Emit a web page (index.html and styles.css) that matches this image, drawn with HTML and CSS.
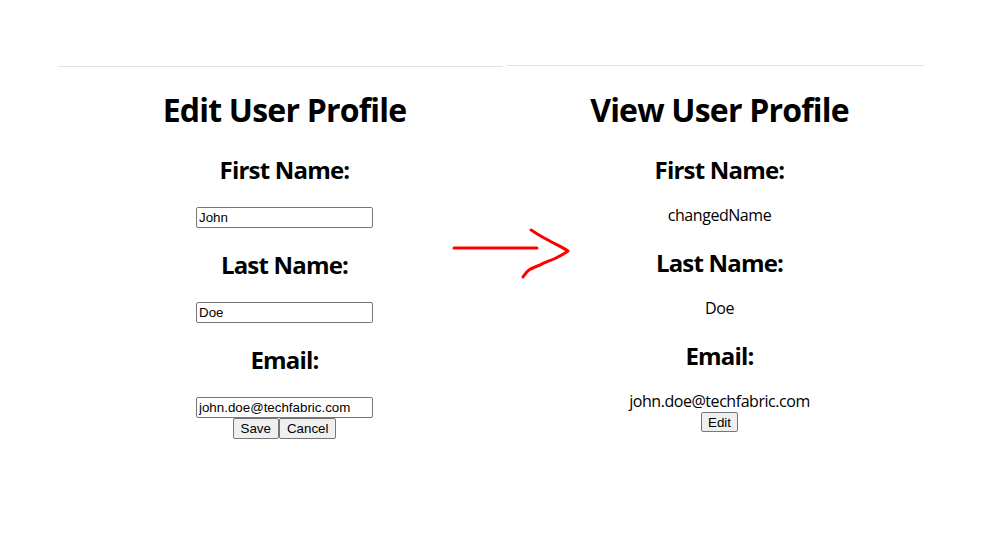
FILE: index.html
```html
<!DOCTYPE html>
<html>
	<head>
		<meta charset="utf-8">
		<title>User Profile</title>
		<link rel="stylesheet" href="styles.css">
	</head>
	<body>
		<div id="page">
			<div class="panel edit">
				<h1>Edit User Profile</h1>
				<h2>First Name:</h2>
				<div class="field"><input type="text" value="John"></div>
				<h2>Last Name:</h2>
				<div class="field"><input type="text" value="Doe"></div>
				<h2>Email:</h2>
				<div class="field last"><input type="text" value="john.doe@techfabric.com"></div>
				<div class="buttons"><button>Save</button><button>Cancel</button></div>
			</div>

			<div class="panel view">
				<h1>View User Profile</h1>
				<h2>First Name:</h2>
				<p>changedName</p>
				<h2>Last Name:</h2>
				<p>Doe</p>
				<h2>Email:</h2>
				<div class="value">john.doe@techfabric.com</div>
				<div class="buttons"><button>Edit</button></div>
			</div>

			<svg id="arrow" width="130" height="70" viewBox="445 220 130 70">
				<path d="M454 248 L537 248" />
				<path d="M531 230 C536 233 542 237 548 240 C555 244 562 247 568 251 C564 254 560 256 556 258 C550 261 545 262 540 265 C535 267 532 268 529 270 C526 272 525 274 523 277" />
			</svg>
		</div>
	</body>
</html>
```

FILE: styles.css
```css
* {
	margin: 0;
	padding: 0;
}
body {
	background-color: #fff;
	color: #000;
	font-family: "Open Sans", "Noto Sans", sans-serif;
	font-size: 16px;
}
#page {
	position: relative;
	display: flex;
	align-items: flex-start;
	padding-top: 65px;
	height: 474px;
}
.panel {
	border-top: 1px solid #e2e2e2;
	padding-left: 8px;
	text-align: center;
}
.edit {
	margin-top: 1px;
	margin-left: 58px;
	width: 437px;
}
.view {
	margin-left: 4px;
	width: 409px;
}
h1 {
	font-size: 32px;
	line-height: 43px;
	letter-spacing: -0.8px;
	margin: 21px 0 22px;
}
.view h1 {
	margin-top: 22px;
}
h2 {
	font-size: 24px;
	line-height: 32px;
	letter-spacing: -0.8px;
	padding-top: 1px;
	margin: 20px 0 19px;
}
p, .value {
	line-height: 21px;
	letter-spacing: -0.45px;
	margin: 0;
}
.field {
	height: 23px;
}
input {
	width: 177px;
	height: 21px;
	box-sizing: border-box;
	border: 1px solid #767676;
	border-radius: 2px;
	padding: 1px 2px;
	font-family: "Liberation Sans", Arial, sans-serif;
	font-size: 13.33px;
	color: #000;
}
.buttons {
	display: flex;
	justify-content: center;
}
button {
	height: 21px;
	padding: 0 7px;
	border: 1px solid #767676;
	border-radius: 2px;
	background-color: #efefef;
	font-family: "Liberation Sans", Arial, sans-serif;
	font-size: 13.33px;
	color: #000;
}
.view .buttons button {
	height: 20px;
	padding: 0 6px;
}
#arrow {
	position: absolute;
	left: 445px;
	top: 220px;
	fill: none;
	stroke: #ff0000;
	stroke-width: 3;
	stroke-linecap: round;
	stroke-linejoin: round;
}
```
